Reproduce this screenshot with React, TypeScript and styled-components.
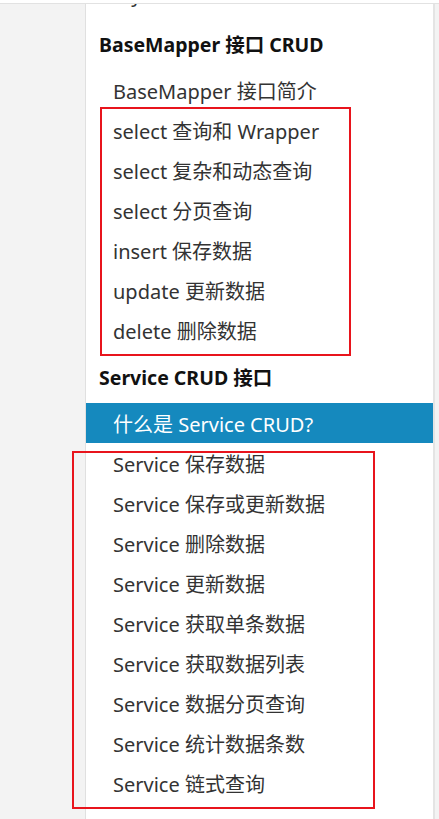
import React from "react";
import styled, { createGlobalStyle } from "styled-components";

const Global = createGlobalStyle`
  html, body { margin: 0; padding: 0; background: #ffffff; }
  body { font-family: "Noto Sans", "Noto Sans CJK SC", sans-serif; }
  #root { height: 819px; overflow: hidden; }
`;

const Page = styled.div`
  position: relative;
  width: 439px;
  height: 819px;
  display: flex;
  flex-direction: column;
  overflow: hidden;
  background: #ffffff;
`;

const TopStrip = styled.div`
  height: 3px;
  flex: none;
  background: #ffffff;
  border-bottom: 1px solid #e2e2e2;
`;

const Body = styled.div`
  flex: 1;
  display: flex;
  min-height: 0;
`;

const Gutter = styled.div<{ $w: number }>`
  width: ${(p) => p.$w}px;
  flex: none;
  background: #f3f3f3;
`;

const Panel = styled.nav`
  flex: 1;
  background: #ffffff;
  border-left: 1px solid #e0e0e0;
  border-right: 2px solid #e4e4e4;
  overflow: hidden;
`;

const List = styled.div`
  margin-top: -31px;
  display: flex;
  flex-direction: column;
`;

const Heading = styled.div`
  height: 53px;
  display: flex;
  align-items: center;
  padding-left: 13px;
  font-size: 19.5px;
  font-weight: 700;
  color: #111;
`;

const Item = styled.div<{ $active?: boolean; $lead?: boolean }>`
  height: 40px;
  flex: none;
  display: flex;
  align-items: center;
  margin: ${(p) => (p.$active ? "0 -1px" : "0")};
  margin-bottom: ${(p) => (p.$lead ? "4px" : "0")};
  padding-left: ${(p) => (p.$active ? "28px" : "27px")};
  font-size: 20px;
  color: ${(p) => (p.$active ? "#ffffff" : "#333333")};
  background: ${(p) => (p.$active ? "#1589be" : "transparent")};
  white-space: nowrap;
`;

const Mark = styled.div<{ $x: number; $y: number; $w: number; $h: number }>`
  position: absolute;
  left: ${(p) => p.$x}px;
  top: ${(p) => p.$y}px;
  width: ${(p) => p.$w}px;
  height: ${(p) => p.$h}px;
  border: 2px solid #e8141c;
  box-sizing: border-box;
  pointer-events: none;
`;

type Entry = { kind: "h" | "i"; text: string; active?: boolean; lead?: boolean };

const entries: Entry[] = [
  { kind: "i", text: "Mybatis-Plus 代码示例", lead: true },
  { kind: "h", text: "BaseMapper 接口 CRUD" },
  { kind: "i", text: "BaseMapper 接口简介" },
  { kind: "i", text: "select 查询和 Wrapper" },
  { kind: "i", text: "select 复杂和动态查询" },
  { kind: "i", text: "select 分页查询" },
  { kind: "i", text: "insert 保存数据" },
  { kind: "i", text: "update 更新数据" },
  { kind: "i", text: "delete 删除数据" },
  { kind: "h", text: "Service CRUD 接口" },
  { kind: "i", text: "什么是 Service CRUD?", active: true },
  { kind: "i", text: "Service 保存数据" },
  { kind: "i", text: "Service 保存或更新数据" },
  { kind: "i", text: "Service 删除数据" },
  { kind: "i", text: "Service 更新数据" },
  { kind: "i", text: "Service 获取单条数据" },
  { kind: "i", text: "Service 获取数据列表" },
  { kind: "i", text: "Service 数据分页查询" },
  { kind: "i", text: "Service 统计数据条数" },
  { kind: "i", text: "Service 链式查询" },
];

export default function App() {
  return (
    <Page>
      <Global />
      <TopStrip />
      <Body>
        <Gutter $w={85} />
        <Panel>
          <List>
            {entries.map((e, i) =>
              e.kind === "h" ? (
                <Heading key={i}>{e.text}</Heading>
              ) : (
                <Item key={i} $active={e.active} $lead={e.lead}>
                  {e.text}
                </Item>
              )
            )}
          </List>
        </Panel>
        <Gutter $w={4} />
      </Body>
      <Mark $x={100} $y={107} $w={251} $h={249} />
      <Mark $x={72} $y={451} $w={303} $h={358} />
    </Page>
  );
}
